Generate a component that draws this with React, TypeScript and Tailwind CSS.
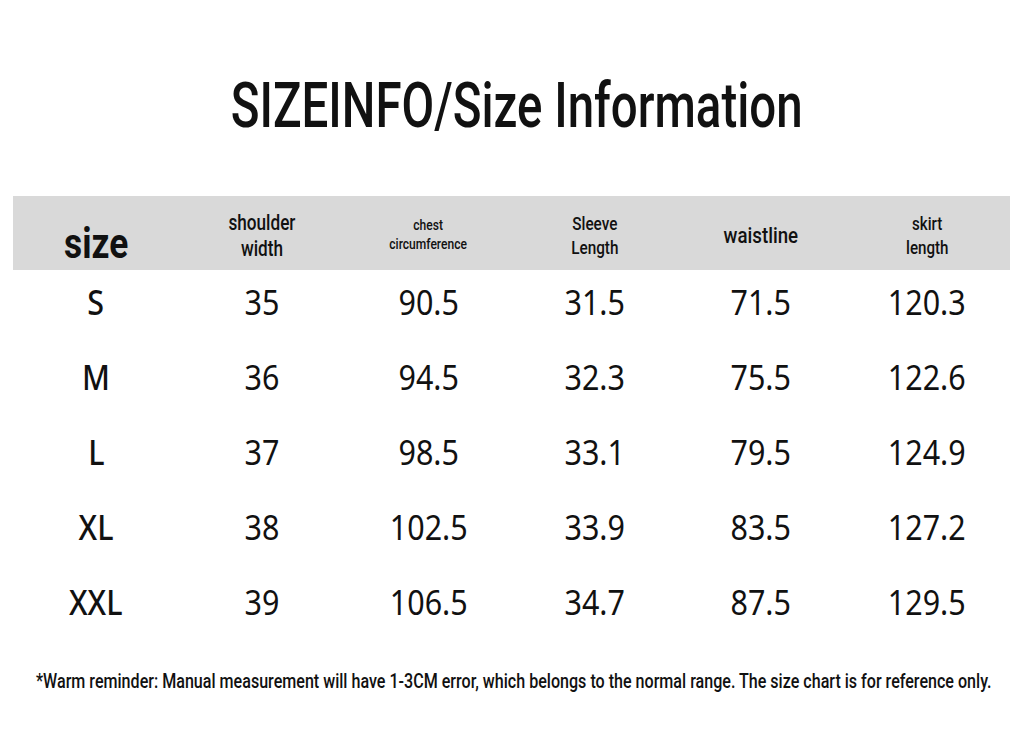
const cond = "font-['Roboto',sans-serif] inline-block whitespace-nowrap";

const headers = [
  { lines: ['shoulder', 'width'], cls: 'text-[22px] leading-[26px] scale-x-[0.78]' },
  { lines: ['chest', 'circumference'], cls: 'text-[14px] leading-[19px] scale-x-[0.86]' },
  { lines: ['Sleeve', 'Length'], cls: 'text-[18px] leading-[24px] scale-x-[0.85]' },
  { lines: ['waistline'], cls: 'text-[22px] leading-[26px] scale-x-[0.85]' },
  { lines: ['skirt', 'length'], cls: 'text-[18px] leading-[24px] scale-x-[0.84]' },
];

const rows = [
  ['S', '35', '90.5', '31.5', '71.5', '120.3'],
  ['M', '36', '94.5', '32.3', '75.5', '122.6'],
  ['L', '37', '98.5', '33.1', '79.5', '124.9'],
  ['XL', '38', '102.5', '33.9', '83.5', '127.2'],
  ['XXL', '39', '106.5', '34.7', '87.5', '129.5'],
];

export default function App() {
  return (
    <div className="w-[1024px] h-[754px] bg-white text-[#111] overflow-hidden">
      <div className="h-[196px] pt-[74px] pl-[9px] text-center">
        <h1 className={`${cond} text-[63px] leading-none font-medium scale-x-[0.753]`}>
          SIZEINFO/Size Information
        </h1>
      </div>
      <div className="ml-[13px] w-[997px]">
        <div className="grid grid-cols-6 h-[74px] bg-[#d9d9d9] items-center text-center">
          <div className="pt-[16px]">
            <span className={`${cond} text-[42px] font-bold scale-x-[0.84]`}>size</span>
          </div>
          {headers.map((h, i) => (
            <div key={i}>
              <div className={`${cond} font-medium ${h.cls}`}>
                {h.lines.map((l) => (
                  <div key={l}>{l}</div>
                ))}
              </div>
            </div>
          ))}
        </div>
        <div className="font-['Noto_Sans',sans-serif] -mt-[5px]">
          {rows.map((r) => (
            <div key={r[0]} className="grid grid-cols-6 h-[75px] items-center text-center">
              {r.map((c, i) => (
                <div key={i}>
                  <span className={`inline-block text-[35px] scale-x-[0.87] ${i === 0 ? 'font-medium' : ''}`}>{c}</span>
                </div>
              ))}
            </div>
          ))}
        </div>
      </div>
      <div className="flex justify-center mt-[26px] pl-[4px]">
        <p className={`${cond} shrink-0 text-[21px] font-medium scale-x-[0.766]`}>
          *Warm reminder: Manual measurement will have 1-3CM error, which belongs to the normal range. The size chart is for reference only.
        </p>
      </div>
    </div>
  );
}
